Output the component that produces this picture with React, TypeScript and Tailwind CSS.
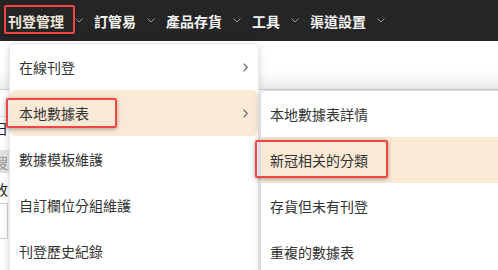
import React from "react";

const Chevron = () => (
  <svg width="8" height="5" viewBox="0 0 8 5" className="shrink-0">
    <polyline points="0.5,0.5 4,4 7.5,0.5" fill="none" stroke="#9a9a9a" strokeWidth="1" />
  </svg>
);

const RightChev = () => (
  <svg width="5" height="9" viewBox="0 0 5 9" className="shrink-0">
    <polyline points="0.6,0.6 4.2,4.5 0.6,8.4" fill="none" stroke="#666" strokeWidth="1.2" />
  </svg>
);

const navItems = ["刊登管理", "訂管易", "產品存貨", "工具", "渠道設置"];
const leftItems = ["在線刊登", "本地數據表", "數據模板維護", "自訂欄位分組維護", "刊登歷史紀錄"];
const subItems = ["本地數據表詳情", "新冠相关的分類", "存貨但未有刊登", "重複的數據表"];

export default function App() {
  return (
    <div className="relative w-[498px] h-[270px] overflow-hidden bg-white font-['Noto_Sans_CJK_TC','Noto_Sans_CJK_SC',sans-serif]">
      <nav className="h-[41px] bg-[#252525] flex items-center pl-[8px] gap-[11px]">
        {navItems.map((t, i) => (
          <div key={t} className="flex items-center gap-[11px]">
            <span className={`text-[14px] font-semibold leading-none ${i === 0 ? "text-[#efe7da]" : "text-[#f4f4f4]"}`}>{t}</span>
            <Chevron />
          </div>
        ))}
      </nav>
      <div className="h-[49px] bg-gradient-to-b from-white from-60% to-[#ededed] border-b border-[#cfcfcf]" />
      <div className="flex flex-col">
        <div className="mt-[26px] h-[22px] border-t border-[#e2e2e2] flex items-center overflow-hidden w-[9px]">
          <span className="ml-[-6px] text-[14px] text-[#222] leading-none shrink-0">日</span>
        </div>
        <div className="mt-[12px] h-[23px] w-[9px] bg-[#e3e3e3] flex items-center overflow-hidden">
          <span className="ml-[-6px] text-[14px] text-[#9a9a9a] leading-none shrink-0">搜</span>
        </div>
        <div className="mt-[6px] h-[20px] w-[9px] flex items-center overflow-hidden">
          <span className="ml-[-6px] text-[14px] text-[#222] leading-none shrink-0">收</span>
        </div>
        <div className="mt-[4px] h-[36px] w-[8px] border border-l-0 border-[#cfcfcf]" />
      </div>

      {/* left dropdown */}
      <div className="absolute left-[9px] top-[43px] w-[250px] h-[240px] bg-white rounded-md border border-[#e6e6e6] shadow-[0_2px_8px_rgba(0,0,0,0.15)]">
        {leftItems.map((t, i) => (
          <div
            key={t}
            className={`h-[46px] flex items-center justify-between pl-[9px] pr-[10px] text-[14px] text-[#333] ${i === 1 ? "bg-[#f9e9d5] rounded-md" : ""}`}
          >
            <span>{t}</span>
            {i < 2 && <RightChev />}
          </div>
        ))}
      </div>

      {/* submenu */}
      <div className="absolute left-[260px] top-[90px] w-[260px] h-[200px] bg-white rounded-tl-md border border-[#dcdcdc] shadow-[0_2px_8px_rgba(0,0,0,0.15)]">
        {subItems.map((t, i) => (
          <div
            key={t}
            className={`h-[46px] flex items-center pl-[9px] text-[14px] text-[#333] ${i === 1 ? "bg-[#f9e9d5]" : ""}`}
          >
            {t}
          </div>
        ))}
      </div>

      {/* annotations */}
      <div className="absolute left-[4px] top-[5px] w-[71px] h-[29px] border-2 border-[#f04545] rounded-[2px] shadow-[0_1px_4px_rgba(0,0,0,0.35)]" />
      <div className="absolute left-[6px] top-[98px] w-[111px] h-[30px] border-2 border-[#f04545] rounded-[2px] shadow-[0_1px_4px_rgba(0,0,0,0.35)]" />
      <div className="absolute left-[255px] top-[140px] w-[133px] h-[38px] border-2 border-[#f04545] rounded-[2px] shadow-[0_1px_4px_rgba(0,0,0,0.35)]" />
    </div>
  );
}
